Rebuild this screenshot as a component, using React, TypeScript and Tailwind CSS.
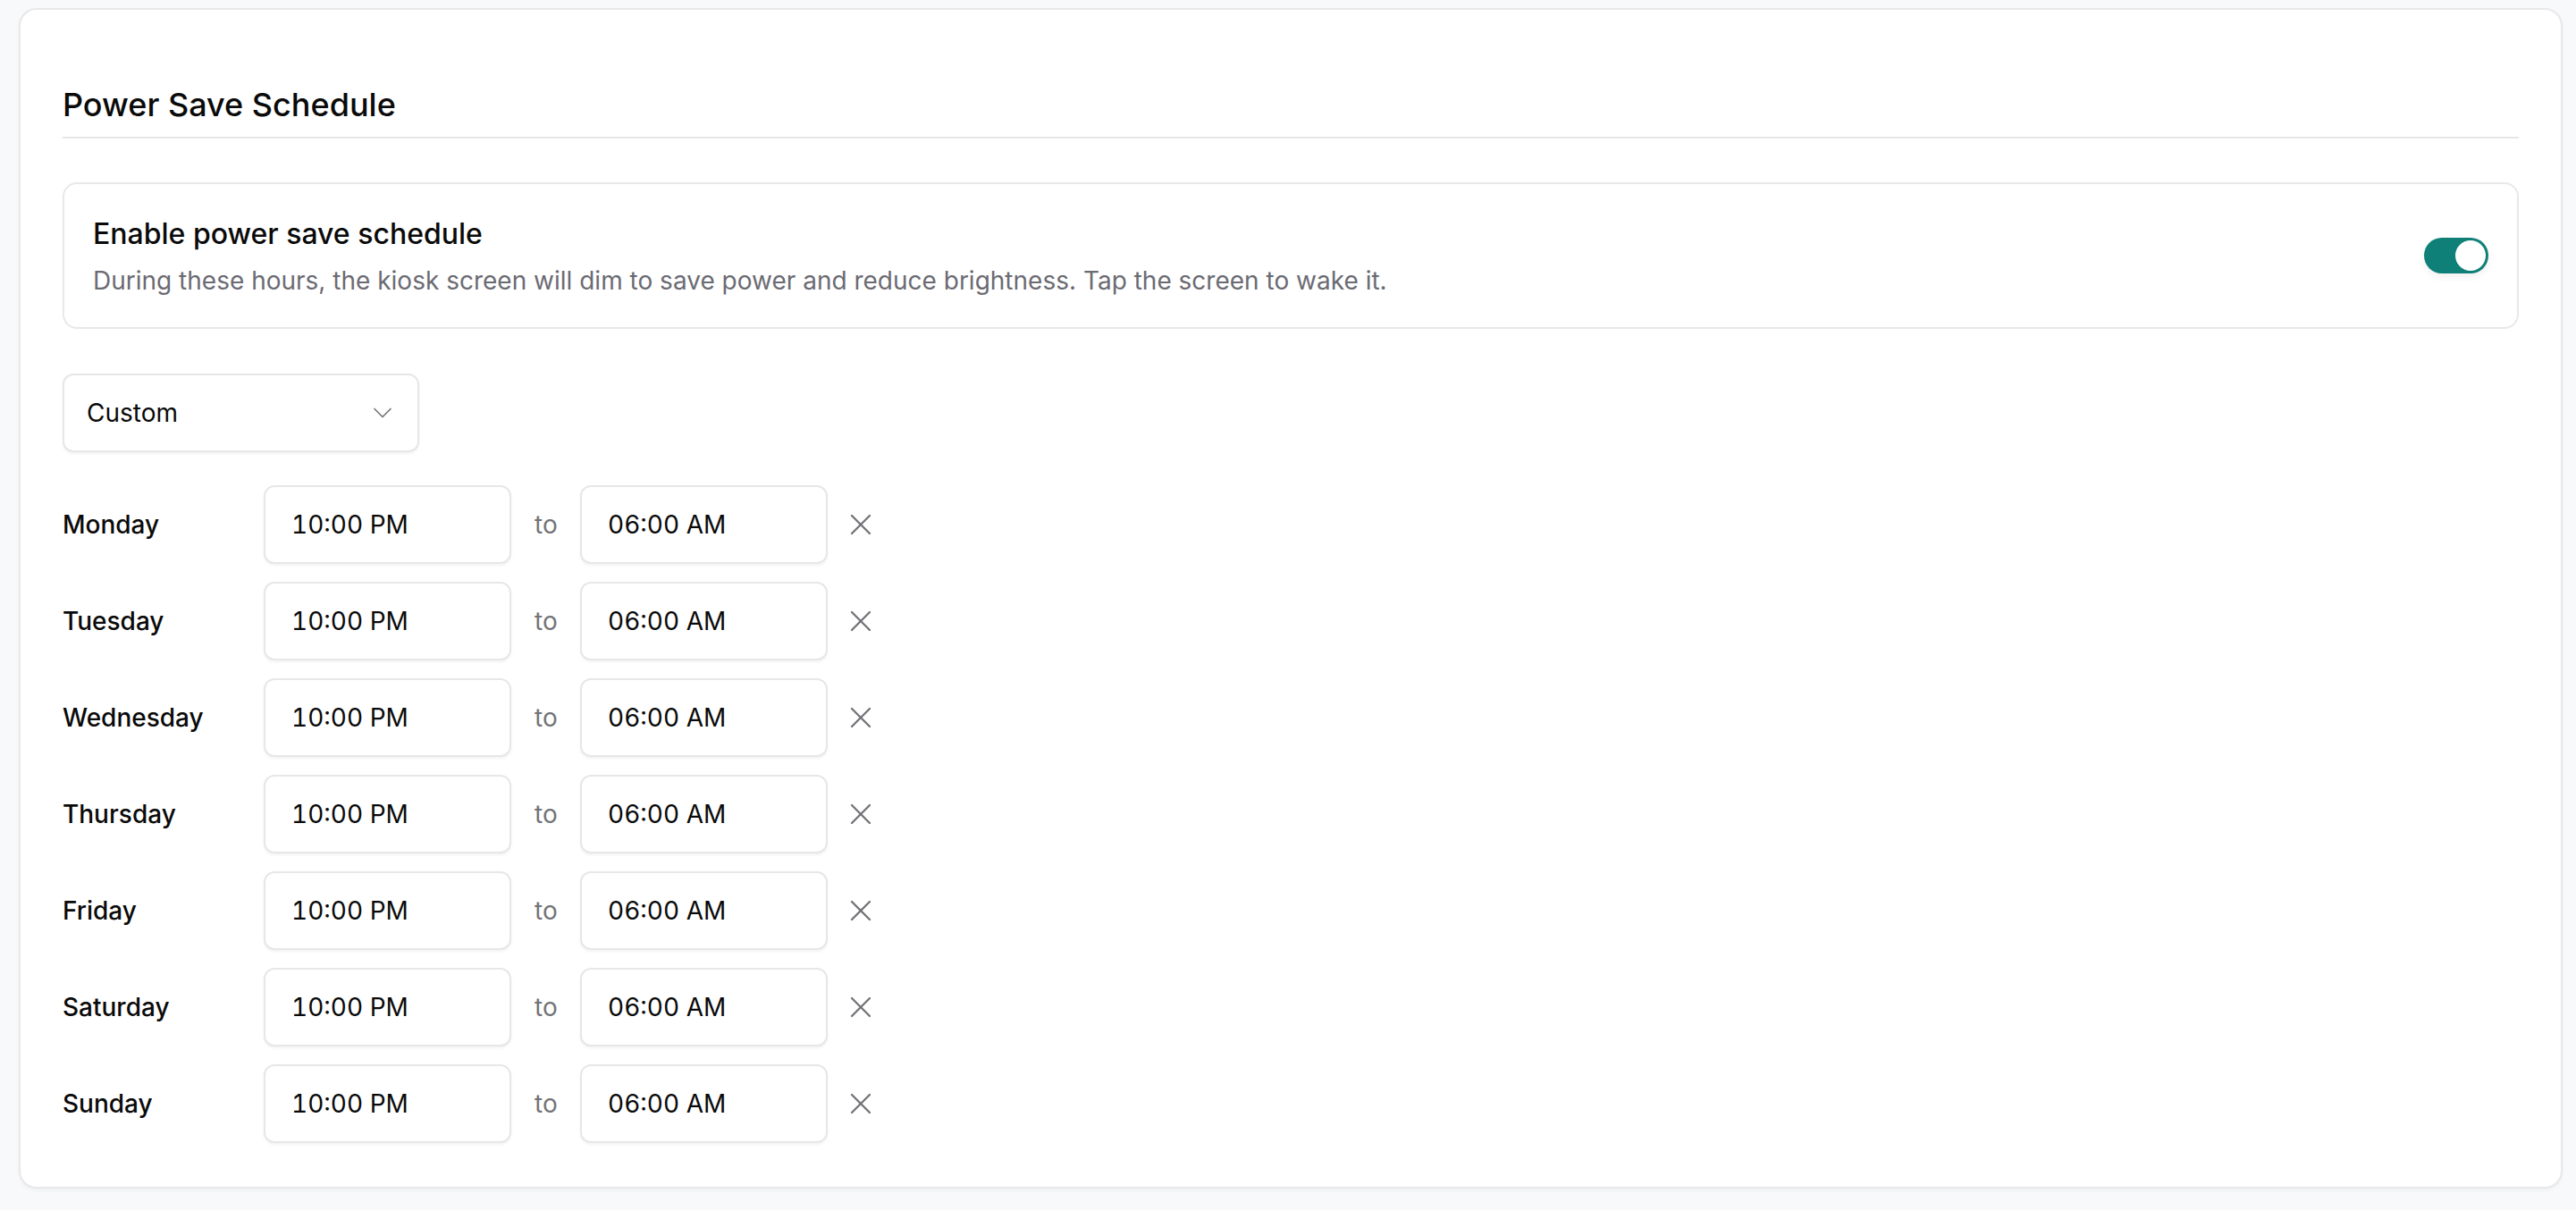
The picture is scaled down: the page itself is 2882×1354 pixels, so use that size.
import React from "react";
import { ChevronDown, X } from "lucide-react";

const days = ["Monday", "Tuesday", "Wednesday", "Thursday", "Friday", "Saturday", "Sunday"];

function TimeBox({ value }: { value: string }) {
  return (
    <div className="flex h-[88px] w-[277px] items-center rounded-[12px] border-2 border-[#e7e7ea] bg-white pl-[29px] text-[28px] tabular-nums text-[#0a0a0a] shadow-[0_2px_3px_rgba(0,0,0,0.05)]">
      {value}
    </div>
  );
}

export default function App() {
  return (
    <div className="min-h-screen bg-[#f8f9fb] pb-[26px] pl-[21px] pr-[15px] pt-[9px] font-['Inter',sans-serif] text-[#0a0a0a]">
      <div className="rounded-[20px] border-2 border-[#e8e8eb] bg-white px-[47px] pb-[49px] pt-[78px] shadow-[0_2px_4px_rgba(0,0,0,0.04)]">
        <div className="border-b-2 border-[#e6e6e9] pb-[8px]">
          <h2 className="text-[36px] font-medium leading-[56px] text-[#0a0a0a]">Power Save Schedule</h2>
        </div>

        <div className="mt-[49px] flex items-center justify-between rounded-[16px] border-2 border-[#e8e8eb] p-[32px]">
          <div className="flex flex-col">
            <div className="text-[32px] font-medium leading-[48px] text-[#0a0a0a]">Enable power save schedule</div>
            <div className="mt-[8px] text-[28px] leading-[40px] text-[#6b6b73]">
              During these hours, the kiosk screen will dim to save power and reduce brightness. Tap the screen to wake it.
            </div>
          </div>
          <div className="flex h-[40px] w-[72px] items-center justify-end rounded-full bg-[#0e8077] p-[3px] shadow-[0_4px_8px_rgba(0,0,0,0.06)]">
            <div className="h-[34px] w-[34px] rounded-full bg-white" />
          </div>
        </div>

        <div className="mt-[50px] flex h-[88px] w-[399px] items-center justify-between rounded-[12px] border-2 border-[#e7e7ea] bg-white pl-[25px] pr-[21px] text-[28px] text-[#0a0a0a] shadow-[0_2px_3px_rgba(0,0,0,0.05)]">
          <span>Custom</span>
          <ChevronDown size={36} strokeWidth={1.1} className="text-[#737378]" />
        </div>

        <div className="mt-[37px] flex flex-col gap-[20px]">
          {days.map((d) => (
            <div key={d} className="flex items-center gap-[26px]">
              <div className="w-[199px] text-[28px] font-medium text-[#0a0a0a]">{d}</div>
              <TimeBox value="10:00 PM" />
              <span className="w-[25px] text-[28px] text-[#737378]">to</span>
              <TimeBox value="06:00 AM" />
              <X size={40} strokeWidth={1.4} className="-ml-[9px] text-[#737378]" />
            </div>
          ))}
        </div>
      </div>
    </div>
  );
}
